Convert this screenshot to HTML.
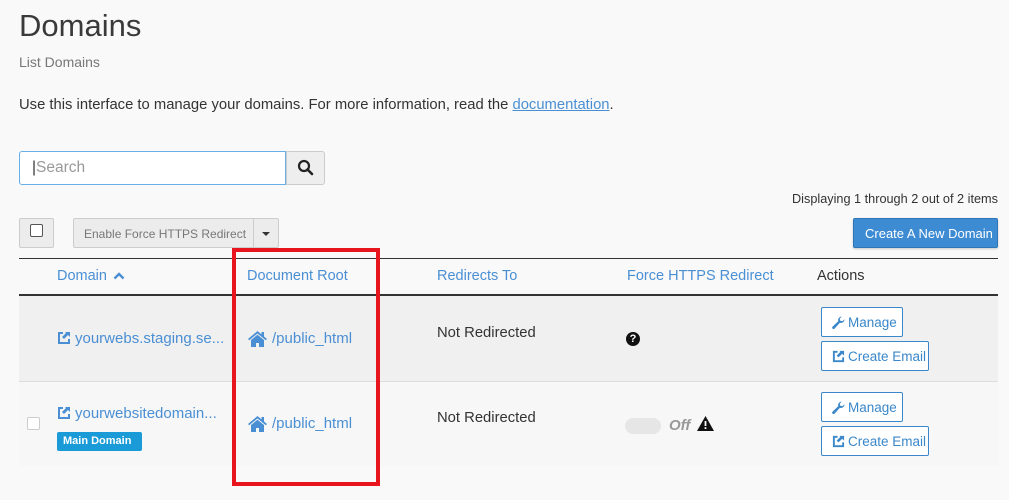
<!DOCTYPE html>
<html><head><meta charset="utf-8"><style>
*{box-sizing:border-box;margin:0;padding:0}
body{width:1009px;height:500px;background:#f9f9f9;font-family:"Liberation Sans",sans-serif;color:#333;position:relative;overflow:hidden;font-size:14px}
.a{position:absolute;white-space:nowrap}
.link{color:#4a8fd4}
.btn{position:absolute;border:1px solid #3a87c9;background:#fff;color:#3a87c9;border-radius:2px;font-size:13.5px;display:flex;align-items:center;padding-left:10px;gap:3px}
</style></head><body>
<div class="a" style="left:19px;top:8px;font-size:31px;color:#3a3a3a">Domains</div>
<div class="a" style="left:19px;top:54px;font-size:14px;color:#777">List Domains</div>
<div class="a" style="left:19px;top:97px;font-size:14.8px">Use this interface to manage your domains. For more information, read the <span class="link" style="text-decoration:underline">documentation</span>.</div>

<div class="a" style="left:19px;top:151px;width:267px;height:34px;border:1px solid #66afe9;background:#fff;border-radius:3px 0 0 3px"></div>
<div class="a" style="left:32px;top:159px;font-size:15.5px;color:#999"><span style="color:#333">|</span>Search</div>
<div class="a" style="left:286px;top:151px;width:39px;height:34px;border:1px solid #ccc;background:#eee;border-radius:0 3px 3px 0"></div>
<svg class="a" style="left:297px;top:159px" width="17" height="17" viewBox="0 0 17 17"><circle cx="7" cy="7" r="5" fill="none" stroke="#222" stroke-width="2.2"/><line x1="10.5" y1="10.5" x2="15" y2="15" stroke="#222" stroke-width="2.6" stroke-linecap="round"/></svg>

<div class="a" style="left:792px;top:192px;font-size:12.7px">Displaying 1 through 2 out of 2 items</div>

<div class="a" style="left:19px;top:218px;width:35px;height:30px;border:1px solid #ccc;background:#ececec;border-radius:2px"></div>
<div class="a" style="left:30px;top:224px;width:13px;height:13px;border:1px solid #555;border-radius:2px;background:#fff"></div>
<div class="a" style="left:73px;top:218px;width:181px;height:30px;border:1px solid #ccc;background:#ececec;border-radius:2px 0 0 2px;color:#777;font-size:12px;padding:8px 0 0 10px">Enable Force HTTPS Redirect</div>
<div class="a" style="left:253px;top:218px;width:26px;height:30px;border:1px solid #ccc;background:#ececec;border-radius:0 2px 2px 0"></div>
<div class="a" style="left:262px;top:232px;border-left:4px solid transparent;border-right:4px solid transparent;border-top:4px solid #333"></div>

<div class="a" style="left:853px;top:218px;width:145px;height:30px;background:#3d8bd3;border:1px solid #2e76b8;border-radius:2px;color:#fff;font-size:13px;padding:7px 0 0 11px;box-shadow:0 1px 2px rgba(0,0,0,.2)">Create A New Domain</div>

<div class="a" style="left:19px;top:258px;width:979px;height:1px;background:#333"></div>
<div class="a link" style="left:57px;top:268px;font-size:14.5px">Domain</div>
<svg class="a" style="left:113px;top:271px" width="12" height="9" viewBox="0 0 12 9"><path d="M1.5 7.5L6 3l4.5 4.5" fill="none" stroke="#4a8fd4" stroke-width="2.4"/></svg>
<div class="a link" style="left:247px;top:268px;font-size:14.5px">Document Root</div>
<div class="a link" style="left:437px;top:268px;font-size:14.5px">Redirects To</div>
<div class="a link" style="left:627px;top:268px;font-size:14.5px">Force HTTPS Redirect</div>
<div class="a" style="left:817px;top:268px;font-size:14.5px">Actions</div>
<div class="a" style="left:19px;top:294px;width:979px;height:2px;background:#333"></div>

<div class="a" style="left:19px;top:296px;width:979px;height:85px;background:#f0f0f0"></div>
<div class="a" style="left:19px;top:381px;width:979px;height:1px;background:#ddd"></div>
<div class="a" style="left:19px;top:382px;width:979px;height:84px;background:#f7f7f7"></div>

<svg class="a" style="left:57px;top:331px" width="14" height="14" viewBox="0 0 14 14"><path d="M6 2H2v10h10V8" fill="none" stroke="#4a8fd4" stroke-width="2"/><path d="M8 1h5v5l-2-2-4 4-2-2 4-4z" fill="#4a8fd4"/></svg>
<div class="a link" style="left:75px;top:330px;font-size:15px">yourwebs.staging.se...</div>
<svg class="a" style="left:57px;top:406px" width="14" height="14" viewBox="0 0 14 14"><path d="M6 2H2v10h10V8" fill="none" stroke="#4a8fd4" stroke-width="2"/><path d="M8 1h5v5l-2-2-4 4-2-2 4-4z" fill="#4a8fd4"/></svg>
<div class="a link" style="left:75px;top:405px;font-size:15px">yourwebsitedomain...</div>
<div class="a" style="left:27px;top:417px;width:13px;height:13px;border:1px solid #ccc;border-radius:2px;background:#fff"></div>
<div class="a" style="left:57px;top:432px;width:85px;height:19px;background:#1a9bd7;border-radius:2px;color:#fff;font-weight:bold;font-size:11px;padding:3px 0 0 6px">Main Domain</div>

<svg class="a" style="left:247px;top:330px" width="21" height="17" viewBox="0 0 21 17"><path d="M10.5 1L1 9l1.2 1.3L10.5 3.5l8.3 6.8L20 9l-3-2.5V2h-2.5v2.4z" fill="#4a8fd4"/><path d="M4 10v7h5v-4h3v4h5v-7l-6.5-5.3z" fill="#4a8fd4"/></svg>
<div class="a link" style="left:272px;top:330px;font-size:15px">/public_html</div>
<svg class="a" style="left:247px;top:415px" width="21" height="17" viewBox="0 0 21 17"><path d="M10.5 1L1 9l1.2 1.3L10.5 3.5l8.3 6.8L20 9l-3-2.5V2h-2.5v2.4z" fill="#4a8fd4"/><path d="M4 10v7h5v-4h3v4h5v-7l-6.5-5.3z" fill="#4a8fd4"/></svg>
<div class="a link" style="left:272px;top:415px;font-size:15px">/public_html</div>

<div class="a" style="left:437px;top:325px;font-size:14.8px">Not Redirected</div>
<div class="a" style="left:437px;top:410px;font-size:14.8px">Not Redirected</div>

<div class="a" style="left:626px;top:332px;width:14px;height:14px;border-radius:50%;background:#111;color:#fff;font-size:11px;font-weight:bold;text-align:center;line-height:14px">?</div>
<div class="a" style="left:625px;top:418px;width:36px;height:16px;border-radius:8px;background:#e6e6e6"></div>
<div class="a" style="left:669px;top:417px;font-size:15px;font-style:italic;font-weight:bold;color:#999">Off</div>
<svg class="a" style="left:697px;top:416px" width="17" height="15" viewBox="0 0 17 15"><path d="M8.5 0L17 15H0z" fill="#111"/><rect x="7.6" y="5" width="1.8" height="5" fill="#fff"/><rect x="7.6" y="11.2" width="1.8" height="1.8" fill="#fff"/></svg>

<div class="btn" style="left:821px;top:307px;width:82px;height:30px"><svg width="13" height="13" viewBox="0 0 13 13"><path d="M12.5 3.2a3.6 3.6 0 0 1-4.6 3.6L2.6 12.6a1.3 1.3 0 0 1-2-2L6.3 5.1A3.6 3.6 0 0 1 9.8.5L7.7 2.6l.6 2.1 2.1.6z" fill="#3a87c9"/></svg>Manage</div>
<div class="btn" style="left:821px;top:341px;width:108px;height:30px"><svg width="13" height="13" viewBox="0 0 14 14"><path d="M6 2H2v10h10V8" fill="none" stroke="#3a87c9" stroke-width="2"/><path d="M8 1h5v5l-2-2-4 4-2-2 4-4z" fill="#3a87c9"/></svg>Create Email</div>
<div class="btn" style="left:821px;top:392px;width:82px;height:30px"><svg width="13" height="13" viewBox="0 0 13 13"><path d="M12.5 3.2a3.6 3.6 0 0 1-4.6 3.6L2.6 12.6a1.3 1.3 0 0 1-2-2L6.3 5.1A3.6 3.6 0 0 1 9.8.5L7.7 2.6l.6 2.1 2.1.6z" fill="#3a87c9"/></svg>Manage</div>
<div class="btn" style="left:821px;top:426px;width:108px;height:30px"><svg width="13" height="13" viewBox="0 0 14 14"><path d="M6 2H2v10h10V8" fill="none" stroke="#3a87c9" stroke-width="2"/><path d="M8 1h5v5l-2-2-4 4-2-2 4-4z" fill="#3a87c9"/></svg>Create Email</div>

<div class="a" style="left:232px;top:248px;width:148px;height:238px;border:4px solid #e8141e"></div>
</body></html>
